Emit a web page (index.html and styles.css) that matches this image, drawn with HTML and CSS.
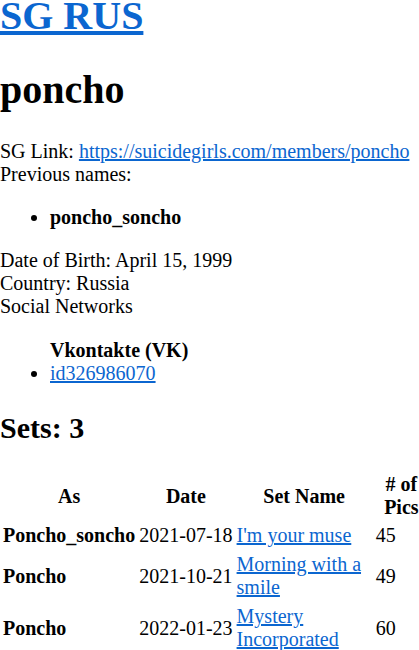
FILE: index.html
```html
<!DOCTYPE html>
<html lang="en">
<head>
  <meta charset="UTF-8" />
  <meta name="viewport" content="width=device-width, initial-scale=1.0" />
  <title>poncho - SG RUS</title>
  <link rel="stylesheet" href="styles.css">
</head>
<body>
  <h1 class="site-title"><a href="#">SG RUS</a></h1>

  <h1>poncho</h1>
  <div class="info">
    SG Link: <a href="#">https://suicidegirls.com/members/poncho</a><br>
    Previous names:
    <ul>
      <li><b>poncho_soncho</b></li>
    </ul>
    Date of Birth: April 15, 1999<br>
    Country: Russia<br>
    Social Networks
    <ul class="socials">
      <b>Vkontakte (VK)</b>
      <li><a href="#">id326986070</a></li>
    </ul>
  </div>

  <h2>Sets: 3</h2>
  <table class="sets">
    <thead>
      <tr>
        <th>As</th>
        <th>Date</th>
        <th>Set Name</th>
        <th># of Pics</th>
      </tr>
    </thead>
    <tbody>
      <tr>
        <th>Poncho_soncho</th>
        <td class="date">2021-07-18</td>
        <td><a href="#">I'm your muse</a></td>
        <td>45</td>
      </tr>
      <tr>
        <th>Poncho</th>
        <td class="date">2021-10-21</td>
        <td><a href="#">Morning with a smile</a></td>
        <td>49</td>
      </tr>
      <tr>
        <th>Poncho</th>
        <td class="date">2022-01-23</td>
        <td><a href="#">Mystery Incorporated</a></td>
        <td>60</td>
      </tr>
    </tbody>
  </table>
</body>
</html>
```

FILE: styles.css
```css
body {
  margin: 0;
  font-family: "Liberation Serif", "Times New Roman", serif;
  font-size: 20px;
  color: #000;
  background-color: #fff;
}
a {
  color: #0b66d0;
}
h1 {
  font-size: 40px;
  margin: 27px 0;
}
h1.site-title {
  margin-top: -8px;
}
h2 {
  font-size: 30px;
  margin: 26px 0 25px;
}
ul {
  margin: 20px 0;
  padding-left: 50px;
}
.socials {
  margin-top: 21px;
}
.sets {
  width: 430px;
  border-spacing: 2.5px;
  margin-top: 22px;
}
.sets th,
.sets td {
  padding: 1px;
}
.sets tbody th {
  text-align: left;
}
.sets tbody td {
  padding: 2px 1px;
}
.sets .date {
  white-space: nowrap;
}
```
